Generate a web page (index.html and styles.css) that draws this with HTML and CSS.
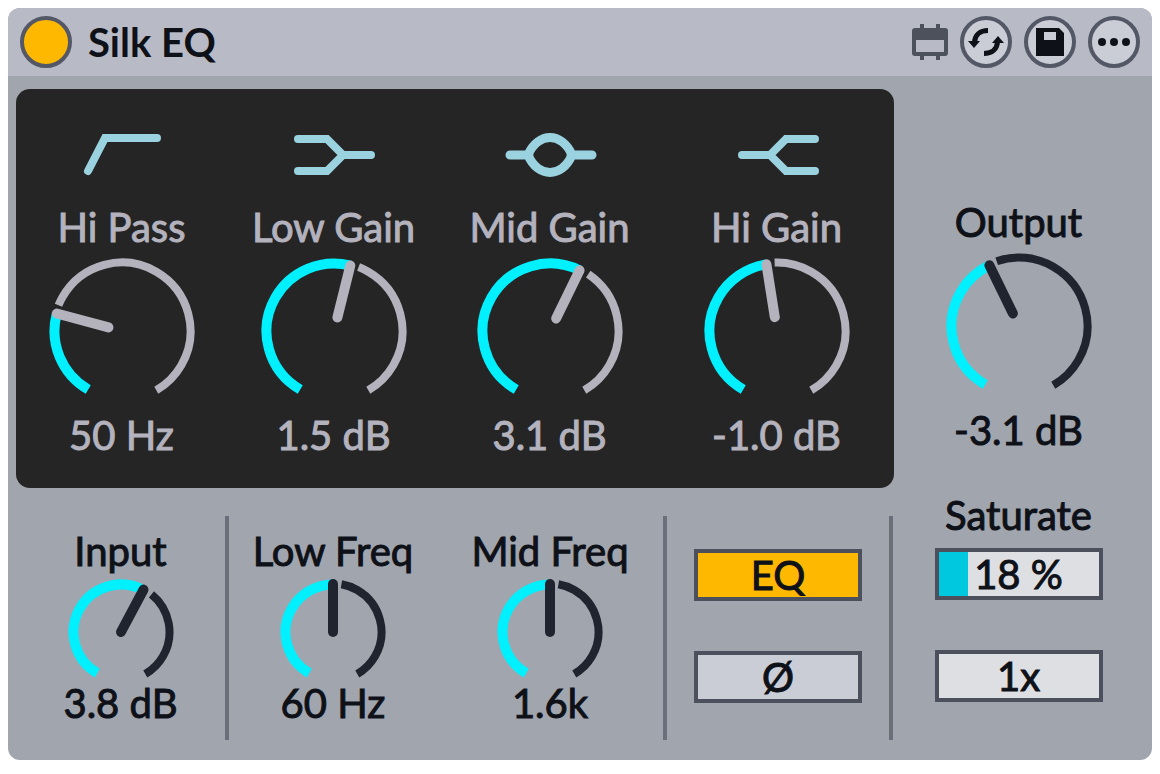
FILE: index.html
```
<!DOCTYPE html>
<html lang="en">
<head>
<meta charset="utf-8">
<title>Silk EQ</title>
<link rel="stylesheet" href="styles.css">
</head>
<body>
<main class="device">
  <header class="titlebar">
    <button class="power" type="button" aria-label="Device on" aria-pressed="true"></button>
    <h1 class="title">Silk EQ</h1>
    <div class="tools">
      <svg class="slot" viewBox="0 0 36 36" aria-hidden="true">
        <path fill-rule="evenodd" d="M8 0h4v4h12V0h4v4h5a3 3 0 0 1 3 3v22a3 3 0 0 1-3 3h-5v4h-4v-4H12v4H8v-4H3a3 3 0 0 1-3-3V7a3 3 0 0 1 3-3h5zM4 16v12h28V16z"/>
      </svg>
      <button class="tool" type="button" aria-label="Hot-swap preset">
        <svg viewBox="0 0 52 52"><g id="swap"><path class="swap-arc" d="M28 14.500C20 14.500 15 19 14.500 26"/><path d="M8 25h12l-6 7z"/></g><use href="#swap" transform="rotate(180 26 26)"/></svg>
      </button>
      <button class="tool" type="button" aria-label="Save preset">
        <svg viewBox="0 0 52 52"><path fill-rule="evenodd" d="M12 12h23l5 5v23H12zM20 16v8h12v-8z"/></svg>
      </button>
      <button class="tool" type="button" aria-label="More options">
        <svg viewBox="0 0 52 52"><circle cx="14" cy="26" r="4"/><circle cx="26" cy="26" r="4"/><circle cx="38" cy="26" r="4"/></svg>
      </button>
    </div>
  </header>

  <div class="body">
    <div class="main">
      <section class="panel" aria-label="Equalizer">
        <div class="control">
          <svg class="curve" viewBox="0 0 96 48" aria-hidden="true"><path d="M14 40L31 7H83"/></svg>
          <label for="hi-pass">Hi Pass</label>
          <div class="knob">
            <svg viewBox="0 0 146 136" aria-hidden="true">
              <circle class="rest" cx="73" cy="73" r="68.500" pathLength="360" stroke-dasharray="0 82 218 360" transform="rotate(120 73 73)"/>
              <circle class="value" cx="73" cy="73" r="67.500" pathLength="360" stroke-dasharray="75 360" transform="rotate(120 73 73)"/>
              <path class="hand" d="M73 59V5.500" transform="rotate(-75 73 73)"/>
            </svg>
            <input id="hi-pass" type="range" min="0" max="300" value="75">
          </div>
          <output for="hi-pass">50 Hz</output>
        </div>
        <div class="control">
          <svg class="curve" viewBox="0 0 96 48" aria-hidden="true"><path d="M12 8H41L57 24H85M12 40H41L57 24"/></svg>
          <label for="low-gain">Low Gain</label>
          <div class="knob">
            <svg viewBox="0 0 146 136" aria-hidden="true">
              <circle class="rest" cx="73" cy="73" r="68.500" pathLength="360" stroke-dasharray="0 171 129 360" transform="rotate(120 73 73)"/>
              <circle class="value" cx="73" cy="73" r="67.500" pathLength="360" stroke-dasharray="164 360" transform="rotate(120 73 73)"/>
              <path class="hand" d="M73 59V5.500" transform="rotate(14 73 73)"/>
            </svg>
            <input id="low-gain" type="range" min="0" max="300" value="164">
          </div>
          <output for="low-gain">1.5 dB</output>
        </div>
        <div class="control">
          <svg class="curve bell" viewBox="0 0 96 48" aria-hidden="true"><path d="M8 24H27M69 24H90M26 24C31 12 40 6.500 48 6.500S65 12 70 24C65 36 56 41.500 48 41.500S31 36 26 24"/></svg>
          <label for="mid-gain">Mid Gain</label>
          <div class="knob">
            <svg viewBox="0 0 146 136" aria-hidden="true">
              <circle class="rest" cx="73" cy="73" r="68.500" pathLength="360" stroke-dasharray="0 184 116 360" transform="rotate(120 73 73)"/>
              <circle class="value" cx="73" cy="73" r="67.500" pathLength="360" stroke-dasharray="176 360" transform="rotate(120 73 73)"/>
              <path class="hand" d="M73 59V5.500" transform="rotate(26 73 73)"/>
            </svg>
            <input id="mid-gain" type="range" min="0" max="300" value="176">
          </div>
          <output for="mid-gain">3.1 dB</output>
        </div>
        <div class="control">
          <svg class="curve" viewBox="0 0 96 48" aria-hidden="true"><path d="M13 24H41L57 8H86M41 24L57 40H86"/></svg>
          <label for="hi-gain">Hi Gain</label>
          <div class="knob">
            <svg viewBox="0 0 146 136" aria-hidden="true">
              <circle class="rest" cx="73" cy="73" r="68.500" pathLength="360" stroke-dasharray="0 148 152 360" transform="rotate(120 73 73)"/>
              <circle class="value" cx="73" cy="73" r="67.500" pathLength="360" stroke-dasharray="141 360" transform="rotate(120 73 73)"/>
              <path class="hand" d="M73 59V5.500" transform="rotate(-9 73 73)"/>
            </svg>
            <input id="hi-gain" type="range" min="0" max="300" value="141">
          </div>
          <output for="hi-gain">-1.0 dB</output>
        </div>
      </section>

      <section class="lower" aria-label="Input and frequencies">
        <div class="control small">
          <label for="input-gain">Input</label>
          <div class="knob">
            <svg viewBox="0 0 106 100" aria-hidden="true">
              <circle class="rest" cx="53" cy="53" r="48.500" pathLength="360" stroke-dasharray="0 189 111 360" transform="rotate(120 53 53)"/>
              <circle class="value" cx="53" cy="53" r="47.500" pathLength="360" stroke-dasharray="178 360" transform="rotate(120 53 53)"/>
              <path class="hand" d="M53 53V5" transform="rotate(28 53 53)"/>
            </svg>
            <input id="input-gain" type="range" min="0" max="300" value="178">
          </div>
          <output for="input-gain">3.8 dB</output>
        </div>
        <div class="divider"></div>
        <div class="control small">
          <label for="low-freq">Low Freq</label>
          <div class="knob">
            <svg viewBox="0 0 106 100" aria-hidden="true">
              <circle class="rest" cx="53" cy="53" r="48.500" pathLength="360" stroke-dasharray="0 160 140 360" transform="rotate(120 53 53)"/>
              <circle class="value" cx="53" cy="53" r="47.500" pathLength="360" stroke-dasharray="150 360" transform="rotate(120 53 53)"/>
              <path class="hand" d="M53 53V5"/>
            </svg>
            <input id="low-freq" type="range" min="0" max="300" value="150">
          </div>
          <output for="low-freq">60 Hz</output>
        </div>
        <div class="control small">
          <label for="mid-freq">Mid Freq</label>
          <div class="knob">
            <svg viewBox="0 0 106 100" aria-hidden="true">
              <circle class="rest" cx="53" cy="53" r="48.500" pathLength="360" stroke-dasharray="0 160 140 360" transform="rotate(120 53 53)"/>
              <circle class="value" cx="53" cy="53" r="47.500" pathLength="360" stroke-dasharray="150 360" transform="rotate(120 53 53)"/>
              <path class="hand" d="M53 53V5"/>
            </svg>
            <input id="mid-freq" type="range" min="0" max="300" value="150">
          </div>
          <output for="mid-freq">1.6k</output>
        </div>
        <div class="divider"></div>
        <div class="toggles">
          <button class="box toggle on" type="button" aria-pressed="true">EQ</button>
          <button class="box toggle" type="button" aria-pressed="false">Ø</button>
        </div>
        <div class="divider"></div>
      </section>
    </div>

    <section class="side" aria-label="Output">
      <div class="control">
        <label for="output-gain">Output</label>
        <div class="knob">
          <svg viewBox="0 0 146 136" aria-hidden="true">
            <circle class="rest" cx="73" cy="73" r="68.500" pathLength="360" stroke-dasharray="0 131 169 360" transform="rotate(120 73 73)"/>
            <circle class="value" cx="73" cy="73" r="67.500" pathLength="360" stroke-dasharray="124 360" transform="rotate(120 73 73)"/>
            <path class="hand" d="M73 59V5.500" transform="rotate(-26 73 73)"/>
          </svg>
          <input id="output-gain" type="range" min="0" max="300" value="124">
        </div>
        <output for="output-gain">-3.1 dB</output>
      </div>
      <div class="saturate">
        <label for="saturate">Saturate</label>
        <div class="amount">
          <input class="box bar" id="saturate" type="range" min="0" max="100" value="18" style="--fill: 18%">
          <output for="saturate">18 %</output>
        </div>
      </div>
      <select class="box oversampling" aria-label="Oversampling">
        <option>1x</option>
      </select>
    </section>
  </div>
</main>
</body>
</html>
```
FILE: styles.css
```
* {
  box-sizing: border-box;
}

body {
  margin: 8px;
  background: #fff;
  color: #0e1118;
  font: 400 40px/48px Lato, "Open Sans", sans-serif;
  -webkit-text-stroke: 1px;
}

button,
select,
input {
  margin: 0;
  padding: 0;
  color: inherit;
  font: inherit;
  -webkit-text-stroke: inherit;
  appearance: none;
  cursor: pointer;
}

svg {
  display: block;
}

.device {
  overflow: hidden;
  border-radius: 12px;
  background: #a1a5ae;
}

/* Title bar */

.titlebar {
  display: flex;
  align-items: center;
  gap: 16px;
  padding: 8px 12px;
  background: #b8bbc5;
}

.power,
.tool {
  width: 52px;
  height: 52px;
  border: 4px solid #535766;
  border-radius: 50%;
}

.power {
  background: #ffb800;
}

.title {
  margin: 0;
  font-size: 40px;
  font-weight: 700;
  -webkit-text-stroke: 0;
}

.tools {
  display: flex;
  align-items: center;
  gap: 12px;
  margin-left: auto;
}

.slot {
  width: 36px;
  height: 36px;
  fill: #4d515b;
}

.tool {
  display: grid;
  place-content: center;
  background: #cacdd6;
}

.tool svg {
  width: 52px;
  height: 52px;
  fill: #0e1118;
}

.swap-arc {
  fill: none;
  stroke: #0e1118;
  stroke-width: 5;
}

/* Layout */

.body {
  display: flex;
  padding: 13px 9px 20px 8px;
}

.main {
  flex: 1;
}

.panel {
  display: grid;
  grid-template-columns: 211fr 213fr 219fr 235fr;
  padding: 42px 0 29px;
  border-radius: 14px;
  background: #252525;
  color: #b3b2bd;
}

.lower {
  display: grid;
  grid-template-columns: 209fr 4px 208fr 226fr 4px 222fr 4px;
  margin: 28px 1px 0 0;
}

.divider {
  background: #6b6f7c;
}

.side {
  display: flex;
  flex-direction: column;
  align-items: center;
  width: 249px;
  padding-top: 109px;
}

/* Knobs */

.control {
  display: flex;
  flex-direction: column;
  align-items: center;
  white-space: nowrap;
}

.control.small {
  padding: 11px 0 13px;
}

.curve {
  width: 96px;
  height: 48px;
  margin-bottom: 24px;
  fill: none;
  stroke: #9ad2df;
  stroke-width: 8;
  stroke-linecap: round;
}

.curve.bell {
  stroke-width: 9;
}

.knob {
  display: grid;
  width: 146px;
  height: 136px;
  margin: 7px 0 17px;
}

.small .knob {
  width: 106px;
  height: 100px;
  margin: 4px 0 0;
}

.knob > * {
  grid-area: 1 / 1;
  width: 100%;
  height: 100%;
}

.knob input {
  opacity: 0;
}

.knob circle,
.hand {
  fill: none;
  stroke: #20242e;
}

.knob .rest {
  stroke-width: 8;
}

.knob .value {
  stroke: #00f0ff;
  stroke-width: 10;
}

.hand {
  stroke-width: 10;
  stroke-linecap: round;
}

.panel .rest,
.panel .hand {
  stroke: #b3b2bd;
}

/* Boxes */

.box {
  display: block;
  width: 168px;
  height: 52px;
  border: 4px solid #4b505c;
  border-radius: 0;
  background: #dedfe3;
  text-align: center;
}

.toggles {
  display: flex;
  flex-direction: column;
  align-items: center;
  gap: 50px;
  padding-top: 33px;
}

.toggle {
  background: #cacdd6;
  line-height: 44px;
}

.toggle.on {
  background: #ffb800;
}

.saturate {
  display: flex;
  flex-direction: column;
  align-items: center;
  gap: 9px;
  margin: 37px 0 50px;
}

.amount {
  display: grid;
  place-items: center;
}

.amount > * {
  grid-area: 1 / 1;
}

.amount output {
  pointer-events: none;
}

.bar {
  background: linear-gradient(to right, #00c9df var(--fill), #dedfe3 var(--fill));
}

.bar::-webkit-slider-thumb {
  width: 1px;
  height: 44px;
  appearance: none;
  background: transparent;
}

.oversampling {
  text-align-last: center;
  line-height: 44px;
}
```
